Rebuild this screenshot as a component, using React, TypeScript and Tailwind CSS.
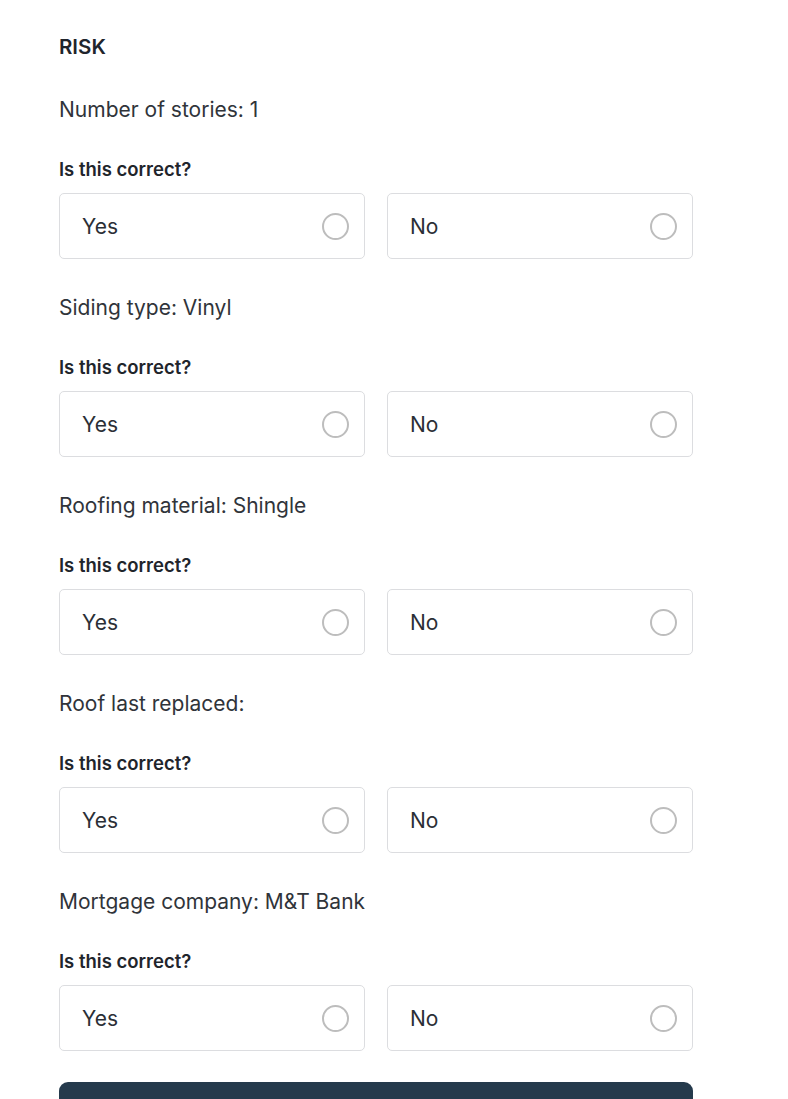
import React, { useState } from 'react';

const questions = [
  'Number of stories: 1',
  'Siding type: Vinyl',
  'Roofing material: Shingle',
  'Roof last replaced:',
  'Mortgage company: M&T Bank',
];

function Option({ label, selected, onClick }: { label: string; selected: boolean; onClick: () => void }) {
  return (
    <button
      type="button"
      onClick={onClick}
      className="flex h-[66px] flex-1 items-center justify-between rounded-[5px] border border-[#dcdde0] bg-white pl-[22px] pr-[15px] text-left"
    >
      <span className="pt-[1px] text-[21px] text-[#2b2f36]">{label}</span>
      <span
        className={`flex h-[27px] w-[27px] items-center justify-center rounded-full border-2 ${
          selected ? 'border-[#253a4c]' : 'border-[#bdbdbd]'
        }`}
      >
        {selected && <span className="h-[13px] w-[13px] rounded-full bg-[#253a4c]" />}
      </span>
    </button>
  );
}

export default function App() {
  const [answers, setAnswers] = useState<Record<number, string>>({});

  return (
    <div className="min-h-[1099px] bg-white font-['Inter','Noto_Sans',sans-serif]">
      <div className="ml-[59px] w-[634px] pt-[34px]">
        <h2 className="text-[20.5px] font-semibold leading-[26px] text-[#1f252c]">RISK</h2>

        {questions.map((q, i) => (
          <div key={q} className={i === 0 ? 'mt-[36px]' : 'mt-[35px]'}>
            <p className="text-[21px] leading-[28px] text-[#30343a]">{q}</p>
            <p className="mt-[33px] text-[18.5px] font-semibold leading-[24px] text-[#1f252c]">Is this correct?</p>
            <div className="mt-[12px] flex gap-[22px]">
              {['Yes', 'No'].map((opt) => (
                <Option
                  key={opt}
                  label={opt}
                  selected={answers[i] === opt}
                  onClick={() => setAnswers({ ...answers, [i]: opt })}
                />
              ))}
            </div>
          </div>
        ))}

        <button
          type="button"
          aria-label="Continue"
          className="mt-[31px] h-[56px] w-full rounded-[9px] bg-[#253a4c]"
        />
      </div>
    </div>
  );
}
